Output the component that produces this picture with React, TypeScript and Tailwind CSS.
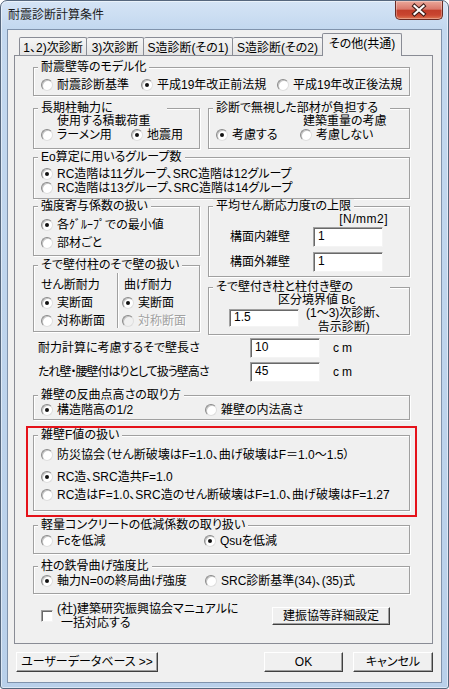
import React from "react";

type RadioProps = {
  label: React.ReactNode;
  checked?: boolean;
  disabled?: boolean;
  className?: string;
};

function Radio({ label, checked, disabled, className = "" }: RadioProps) {
  return (
    <label className={`flex h-[14px] items-center whitespace-nowrap ${className}`}>
      <span
        className={`flex h-[12px] w-[12px] shrink-0 items-center justify-center rounded-full border border-t-[#8a8a8a] border-l-[#8a8a8a] border-r-[#dedede] border-b-[#dedede] shadow-[inset_1px_1px_0_#c4c4c4] ${
          disabled ? "bg-[#f0f0f0]" : "bg-white"
        }`}
      >
        {checked && <span className="h-[4px] w-[4px] rounded-full bg-[#111]" />}
      </span>
      <span className={`ml-[4px] ${disabled ? "text-[#a0a0a0] [text-shadow:1px_1px_0_#fff]" : ""}`}>
        {label}
      </span>
    </label>
  );
}

type GroupProps = {
  label: React.ReactNode;
  legendW?: string;
  tight?: boolean;
  className?: string;
  children: React.ReactNode;
};

// group box; "tight" legends are used where a second label line follows right below
function Group({ label, legendW = "", tight, className = "", children }: GroupProps) {
  return (
    <fieldset
      className={`min-w-0 border border-[#a0a0a0] shadow-[inset_1px_1px_0_#fff,1px_1px_0_#fff] ${className}`}
    >
      <legend
        className={`ml-[4px] bg-[#f0f0f0] px-[3px] whitespace-nowrap ${tight ? "leading-[12px]" : "leading-[14px]"} ${legendW}`}
      >
        {label}
      </legend>
      {children}
    </fieldset>
  );
}

function Field({ value, className = "" }: { value: string; className?: string }) {
  return (
    <input
      readOnly
      value={value}
      className={`border border-t-[#a0a0a0] border-l-[#a0a0a0] border-r-[#f4f4f4] border-b-[#f4f4f4] bg-white pb-[3px] pl-[4px] text-black shadow-[inset_1px_1px_0_#696969] outline-none ${className}`}
    />
  );
}

function Btn({ children, className = "" }: { children: React.ReactNode; className?: string }) {
  return (
    <button
      className={`flex items-center justify-center border border-t-white border-l-white border-r-[#404040] border-b-[#404040] bg-[#f0f0f0] shadow-[inset_-1px_-1px_0_#a0a0a0] ${className}`}
    >
      {children}
    </button>
  );
}

const tabs = [
  { label: "1、2)次診断", w: "w-[68px]" },
  { label: "3)次診断", w: "w-[57px]" },
  { label: "S造診断(その1)", w: "w-[89px]" },
  { label: "S造診断(その2)", w: "w-[90px]" },
];

export default function App() {
  return (
    <div className="h-[689px] w-[449px] font-['Liberation_Sans','Noto_Sans_CJK_JP',sans-serif] text-[12px] leading-[14px] text-black [font-feature-settings:'palt']">
      <div className="flex h-full flex-col rounded-t-[7px] rounded-b-[3px] border border-[#56677d] bg-[linear-gradient(180deg,#d5e4f5_0%,#c3d8ef_28px,#b9d0ea_100%)] px-[6px] pb-[5px] shadow-[inset_0_0_0_1px_rgba(255,255,255,0.5)]">
        {/* title bar */}
        <div className="flex h-[28px] items-start">
          <div className="pl-[1px] pt-[7px] text-[#1b1b1b]">耐震診断計算条件</div>
          <div className="-mr-[1px] ml-auto h-[19px] w-[48px] rounded-b-[5px] border border-t-0 border-[#6a2a22] bg-[linear-gradient(180deg,#eaa89a_0%,#d9786b_45%,#c23e2a_52%,#c94530_78%,#de7652_100%)] shadow-[inset_0_0_0_1px_rgba(255,255,255,0.3)]">
            <svg width="46" height="18" viewBox="0 0 46 18">
              <path d="M18.5 5 L27.5 13 M27.5 5 L18.5 13" stroke="#3a1a15" strokeWidth="4.2" strokeLinecap="square" fill="none" />
              <path d="M18.5 5 L27.5 13 M27.5 5 L18.5 13" stroke="#fff" strokeWidth="2.2" strokeLinecap="square" fill="none" />
            </svg>
          </div>
        </div>

        {/* client area */}
        <div className="flex flex-1 flex-col border border-[#8093ac] bg-[#f0f0f0]">
          {/* tabs */}
          <div className="flex h-[25px] items-end pl-[11px]">
            {tabs.map((t, i) => (
              <div
                key={t.label}
                className={`flex h-[18px] justify-center whitespace-nowrap rounded-t-[2px] border-t border-r border-[#898c95] bg-[linear-gradient(180deg,#f6f6f6,#e4e4e4)] pt-[3px] ${
                  i === 0 ? "border-l" : ""
                } ${t.w}`}
              >
                {t.label}
              </div>
            ))}
            <div className="relative z-10 -mb-[1px] -ml-[1px] flex h-[23px] w-[80px] justify-center whitespace-nowrap rounded-t-[2px] border-x border-t border-[#898c95] bg-[#f0f0f0] pt-[3px]">
              その他(共通)
            </div>
          </div>

          {/* tab page */}
          <div className="ml-[6px] h-[589px] w-[419px] border border-[#898c95] pl-[18px]">
            <div className="w-[377px]">
              <Group label="耐震壁等のモデル化" className="mt-[4px]">
                <div className="flex pl-[7px] pt-[4px] pb-[3px]">
                  <Radio label="耐震診断基準" className="w-[100px]" />
                  <Radio checked label="平成19年改正前法規" className="w-[136px]" />
                  <Radio label="平成19年改正後法規" />
                </div>
              </Group>

              <div className="mt-[6px] flex gap-[8px]">
                <Group tight label="長期柱軸力に" legendW="w-[129px]" className="w-[167px]">
                  <div className="pl-[7px] pb-[6px]">
                    <div className="pl-[16px]">使用する積載荷重</div>
                    <div className="flex">
                      <Radio label="ラーメン用" className="w-[90px]" />
                      <Radio checked label="地震用" />
                    </div>
                  </div>
                </Group>
                <Group tight label="診断で無視した部材が負担する" legendW="w-[177px]" className="flex-1">
                  <div className="pl-[7px] pb-[6px]">
                    <div className="pl-[87px]">建築重量の考慮</div>
                    <div className="flex">
                      <Radio checked label="考慮する" className="w-[84px]" />
                      <Radio label="考慮しない" />
                    </div>
                  </div>
                </Group>
              </div>

              <Group label="Eo算定に用いるグループ数" className="mt-[1px]">
                <div className="pl-[7px] pt-[3px] pb-[3px]">
                  <Radio checked label="RC造階は11グループ、SRC造階は12グループ" />
                  <Radio label="RC造階は13グループ、SRC造階は14グループ" />
                </div>
              </Group>

              <div className="flex gap-[8px]">
                <div className="w-[167px]">
                  <Group label="強度寄与係数の扱い">
                    <div className="flex flex-col gap-[4px] pl-[7px] pt-[5px] pb-[5px]">
                      <Radio checked label="各ｸﾞﾙｰﾌﾟでの最小値" />
                      <Radio label="部材ごと" />
                    </div>
                  </Group>
                  <Group label="そで壁付柱のそで壁の扱い" className="mt-[2px]">
                    <div className="flex pl-[7px] pt-[1px] pb-[3px]">
                      <div className="flex w-[76px] flex-col gap-[4px] pt-[5px]">
                        <div>せん断耐力</div>
                        <Radio checked label="実断面" />
                        <Radio label="対称断面" />
                      </div>
                      <div className="flex flex-col gap-[4px] border-l border-[#a0a0a0] pl-[4px] pt-[5px] shadow-[inset_1px_0_0_#fff]">
                        <div className="pl-[2px]">曲げ耐力</div>
                        <Radio checked label="実断面" />
                        <Radio disabled label="対称断面" />
                      </div>
                    </div>
                  </Group>
                </div>

                <div className="flex-1">
                  <Group label="平均せん断応力度τの上限">
                    <div className="pl-[7px] pb-[4px]">
                      <div className="pr-[21px] text-right leading-[12px] tracking-[0.5px]">[N/mm2]</div>
                      <div className="mt-[2px] flex items-center">
                        <span className="ml-[14px] w-[83px]">構面内雑壁</span>
                        <Field value="1" className="h-[20px] w-[70px]" />
                      </div>
                      <div className="mt-[5px] flex items-center">
                        <span className="ml-[14px] w-[83px]">構面外雑壁</span>
                        <Field value="1" className="h-[20px] w-[70px]" />
                      </div>
                    </div>
                  </Group>
                  <Group tight label="そで壁付き柱と柱付き壁の" legendW="w-[177px]" className="mt-[4px]">
                    <div className="pl-[7px]">
                      <div className="pl-[62px]">区分境界値 Bc</div>
                      <div className="flex items-start">
                        <Field value="1.5" className="mt-[2px] ml-[13px] h-[18px] w-[70px] pb-[2px]" />
                        <div className="ml-[7px] text-center leading-[13.5px]">
                          (1～3)次診断、
                          <br />
                          告示診断)
                        </div>
                      </div>
                    </div>
                  </Group>
                </div>
              </div>

              <div className="mt-[3px] flex h-[20px] items-center pl-[5px]">
                <span className="w-[212px]">耐力計算に考慮するそで壁長さ</span>
                <Field value="10" className="h-[20px] w-[70px]" />
                <span className="ml-[13px] tracking-[3px]">cm</span>
              </div>
              <div className="mt-[4px] flex h-[20px] items-center pl-[5px]">
                <span className="w-[212px] tracking-[-1px]">たれ壁・腰壁付はりとして扱う壁高さ</span>
                <Field value="45" className="h-[20px] w-[70px]" />
                <span className="ml-[13px] tracking-[3px]">cm</span>
              </div>

              <Group label="雑壁の反曲点高さの取り方" className="mt-[6px]">
                <div className="flex pl-[7px] pt-[1px] pb-[2px]">
                  <Radio checked label="構造階高の1/2" className="w-[164px]" />
                  <Radio label="雑壁の内法高さ" />
                </div>
              </Group>

              <div className="-mx-[7px] mt-[6px] border-2 border-[#e5121a] px-[5px] pb-[4px]">
                <Group label="雑壁F値の扱い">
                  <div className="pl-[7px] pt-[6px] pb-[8px]">
                    <Radio label="防災協会（せん断破壊はF=1.0、曲げ破壊はF＝1.0～1.5）" />
                    <Radio checked label="RC造、SRC造共F=1.0" className="mt-[8px]" />
                    <Radio
                      label="RC造はF=1.0、SRC造のせん断破壊はF=1.0、曲げ破壊はF=1.27"
                      className="mt-[4px]"
                    />
                  </div>
                </Group>
              </div>

              <Group label="軽量コンクリートの低減係数の取り扱い" className="mt-[1px]">
                <div className="flex pl-[7px] pt-[2px] pb-[5px]">
                  <Radio label="Fcを低減" className="w-[163px]" />
                  <Radio checked label="Qsuを低減" />
                </div>
              </Group>

              <Group label="柱の鉄骨曲げ強度比" className="mt-[5px]">
                <div className="flex pl-[7px] pt-[1px] pb-[5px]">
                  <Radio checked label="軸力N=0の終局曲げ強度" className="w-[164px]" />
                  <Radio label="SRC診断基準(34)、(35)式" />
                </div>
              </Group>

              <div className="mt-[8px] flex items-center pl-[8px]">
                <div className="flex w-[231px] items-center">
                  <span className="h-[12px] w-[12px] shrink-0 border border-t-[#a0a0a0] border-l-[#a0a0a0] border-r-[#f4f4f4] border-b-[#f4f4f4] bg-white shadow-[inset_1px_1px_0_#696969]" />
                  <div className="ml-[4px] whitespace-nowrap leading-[14px]">
                    (社)建築研究振興協会マニュアルに
                    <br />
                    <span className="pl-[4px]">一括対応する</span>
                  </div>
                </div>
                <Btn className="h-[18px] w-[118px]">建振協等詳細設定</Btn>
              </div>
            </div>
          </div>

          {/* bottom buttons */}
          <div className="mt-[8px] flex px-[8px]">
            <Btn className="h-[20px] w-[142px]">ユーザーデータベース &gt;&gt;</Btn>
            <Btn className="ml-auto h-[20px] w-[79px]">OK</Btn>
            <Btn className="ml-[10px] h-[20px] w-[80px]">キャンセル</Btn>
          </div>
        </div>
      </div>
    </div>
  );
}
